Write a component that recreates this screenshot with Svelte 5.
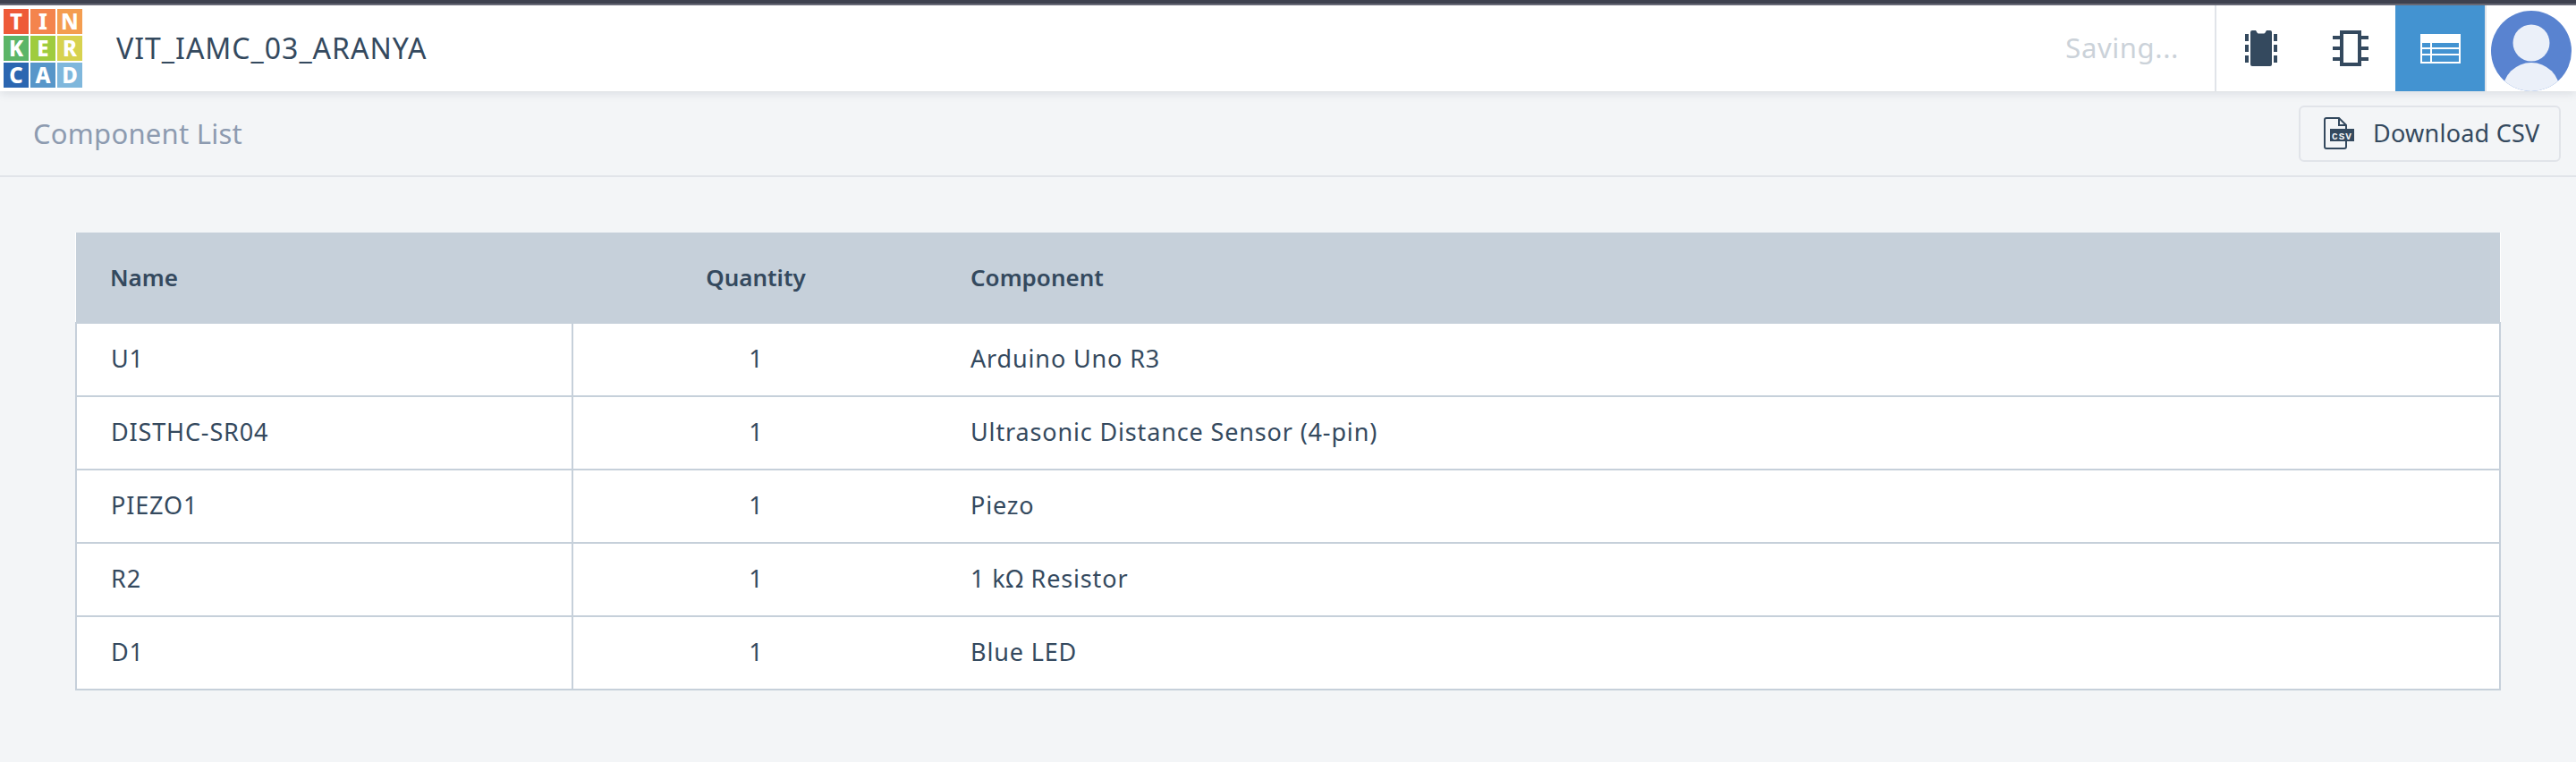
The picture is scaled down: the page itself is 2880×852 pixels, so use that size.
<script>
  const tiles = [
    ['T', '#ee5a38'], ['I', '#f4844d'], ['N', '#f49d50'],
    ['K', '#5cb567'], ['E', '#9fcc3e'], ['R', '#d7d24f'],
    ['C', '#2b66b1'], ['A', '#5796c9'], ['D', '#7fb7dc']
  ];
  const rows = [
    ['U1', 1, 'Arduino Uno R3'],
    ['DISTHC-SR04', 1, 'Ultrasonic Distance Sensor (4-pin)'],
    ['PIEZO1', 1, 'Piezo'],
    ['R2', 1, '1 kΩ Resistor'],
    ['D1', 1, 'Blue LED']
  ];
</script>

<div class="page">
  <div class="topstrip"></div>
  <header class="bar">
    <div class="logo">
      {#each tiles as [letter, colour]}
        <span class="tile" style:background={colour}>{letter}</span>
      {/each}
    </div>
    <div class="title">VIT_IAMC_03_ARANYA</div>
    <div class="saving">Saving...</div>
    <div class="tools">
      <div class="tool">
        <svg width="36" height="40" viewBox="0 0 36 40">
          <path fill="#34495e" fill-rule="evenodd" d="M8 0h4l1.500 2.500q.5 1 1.500 1h6q1 0 1.500-1L24 0h4q2 0 2 2v36q0 2-2 2H8q-2 0-2-2V2q0-2 2-2z"/>
          <g fill="#34495e">
            <rect x="0" y="4" width="4" height="8"/>
            <rect x="0" y="16" width="4" height="8"/>
            <rect x="0" y="28" width="4" height="8"/>
            <rect x="32" y="4" width="4" height="8"/>
            <rect x="32" y="16" width="4" height="8"/>
            <rect x="32" y="28" width="4" height="8"/>
          </g>
        </svg>
      </div>
      <div class="tool">
        <svg width="40" height="40" viewBox="0 0 40 40" fill="#34495e">
          <path fill-rule="evenodd" d="M8 0h24v40H8zM12 4v32h16V4z"/>
          <rect x="0" y="6" width="8" height="4"/>
          <rect x="0" y="18" width="8" height="4"/>
          <rect x="0" y="30" width="8" height="4"/>
          <rect x="32" y="6" width="8" height="4"/>
          <rect x="32" y="18" width="8" height="4"/>
          <rect x="32" y="30" width="8" height="4"/>
        </svg>
      </div>
      <div class="tool active">
        <svg width="45" height="33" viewBox="0 0 45 33">
          <rect width="45" height="33" fill="#fff"/>
          <g fill="#4393d1">
            <rect x="2" y="10" width="9" height="5"/>
            <rect x="13" y="10" width="30" height="5"/>
            <rect x="2" y="17" width="9" height="5"/>
            <rect x="13" y="17" width="30" height="5"/>
            <rect x="2" y="24" width="9" height="7"/>
            <rect x="13" y="24" width="30" height="7"/>
          </g>
        </svg>
      </div>
      <div class="avatar-slot">
        <svg class="avatar" width="90" height="90" viewBox="0 0 90 90">
          <defs>
            <clipPath id="disc"><circle cx="45" cy="45" r="45"/></clipPath>
          </defs>
          <circle cx="45" cy="45" r="45" fill="#5983d0"/>
          <g clip-path="url(#disc)" fill="#ebf0f9">
            <circle cx="45" cy="36" r="20.500"/>
            <circle cx="45" cy="90" r="32"/>
          </g>
        </svg>
      </div>
    </div>
  </header>

  <div class="subbar">
    <div class="heading">Component List</div>
    <button class="csv">
      <svg width="34" height="36" viewBox="0 0 34 36">
        <path fill="none" stroke="#34495e" stroke-width="2" d="M25 27v6q0 2-2 2H3q-2 0-2-2V3q0-2 2-2h14l8 8v5"/>
        <path fill="none" stroke="#34495e" stroke-width="2" d="M17 1v8h8"/>
        <rect x="7" y="13" width="27" height="14" fill="#34495e"/>
        <text x="20.500" y="24.500" class="csv-mark" text-anchor="middle">CSV</text>
      </svg>
      <span>Download CSV</span>
    </button>
  </div>

  <main class="content">
    <table>
      <thead>
        <tr>
          <th class="name">Name</th>
          <th class="qty">Quantity</th>
          <th>Component</th>
        </tr>
      </thead>
      <tbody>
        {#each rows as [name, qty, comp]}
          <tr>
            <td class="name">{name}</td>
            <td class="qty">{qty}</td>
            <td>{comp}</td>
          </tr>
        {/each}
      </tbody>
    </table>
  </main>
</div>

<style>
  :global(body) {
    margin: 0;
    background: #f3f5f7;
  }
  .page {
    height: 852px;
    overflow: hidden;
    background: #f3f5f7;
    color: #34495e;
    font-family: "Noto Sans", "Open Sans", sans-serif;
  }
  .topstrip {
    height: 6px;
    background: linear-gradient(#3f4250 4px, #6a6b78 4px);
  }
  .bar {
    display: flex;
    align-items: center;
    height: 96px;
    background: #fff;
    box-shadow: 0 2px 10px rgba(60, 70, 90, 0.14);
    position: relative;
  }
  .logo {
    display: grid;
    grid-template-columns: repeat(3, 28px);
    grid-auto-rows: 28px;
    gap: 2px;
    margin-left: 4px;
  }
  .tile {
    display: flex;
    align-items: center;
    justify-content: center;
    color: #fff;
    font-weight: 800;
    font-size: 24px;
    line-height: 1;
    outline: 1px solid rgba(255, 255, 255, 0.6);
  }
  .title {
    margin-left: 38px;
    font-size: 32px;
    letter-spacing: 1px;
    padding-bottom: 2px;
  }
  .saving {
    margin-left: auto;
    margin-right: 40px;
    font-size: 31px;
    letter-spacing: 0.6px;
    padding-bottom: 2px;
    color: #cbd2d9;
  }
  .tools {
    display: flex;
    height: 100%;
    border-left: 2px solid #e1e4e9;
  }
  .tool {
    display: flex;
    align-items: center;
    justify-content: center;
    width: 100px;
  }
  .active {
    background: #4393d1;
  }
  .avatar-slot {
    width: 102px;
    height: 96px;
    overflow: hidden;
    border-left: 2px solid #e1e4e9;
    box-sizing: border-box;
    padding: 6px 0 0 5px;
  }
  .avatar {
    display: block;
  }
  .subbar {
    display: flex;
    align-items: center;
    justify-content: space-between;
    height: 94px;
    padding: 0 17px 0 37px;
    border-bottom: 2px solid #e1e4e9;
  }
  .heading {
    font-size: 31px;
    letter-spacing: 0.25px;
    color: #8d9bb0;
  }
  .csv {
    display: flex;
    align-items: center;
    gap: 21px;
    width: 293px;
    height: 63px;
    padding: 0 0 2px 26px;
    box-sizing: border-box;
    background: transparent;
    border: 2px solid #e1e4e9;
    border-radius: 6px;
    color: #34495e;
    font: inherit;
    font-size: 27px;
    letter-spacing: 0.25px;
  }
  .csv svg {
    margin-top: 2px;
  }
  .csv-mark {
    font-family: "Liberation Mono", monospace;
    font-size: 11px;
    font-weight: 700;
    fill: #f3f5f7;
    letter-spacing: 1px;
  }
  .content {
    padding: 62px 84px 0;
  }
  table {
    width: 2712px;
    border-collapse: collapse;
    table-layout: fixed;
    font-size: 27px;
    background: #fff;
  }
  th {
    height: 100px;
    background: #c6d0da;
    text-align: left;
    padding: 0 0 0 35px;
    font-size: 26px;
    font-weight: 600;
    border: 0;
  }
  td {
    height: 82px;
    padding: 0 0 3px 35px;
    box-sizing: border-box;
    border: 2px solid #c6d0da;
    border-left: 0;
    border-right: 0;
    letter-spacing: 0.85px;
  }
  tr > :first-child {
    width: 517px;
    padding-left: 38px;
  }
  td.name {
    border-left: 2px solid #c6d0da;
    border-right: 2px solid #c6d0da;
  }
  td:last-child {
    border-right: 2px solid #c6d0da;
  }
  .qty {
    width: 410px;
    padding-left: 0;
    text-align: center;
  }
</style>
